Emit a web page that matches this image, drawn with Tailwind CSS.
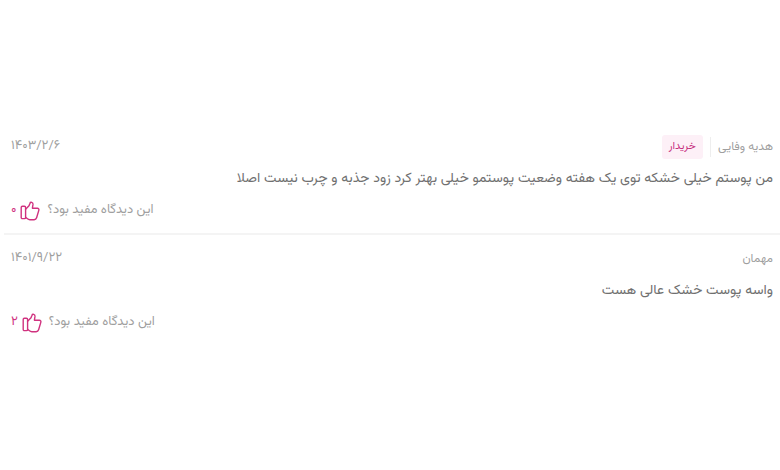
<!DOCTYPE html>
<html lang="fa" dir="rtl">
<head>
  <meta charset="UTF-8" />
  <meta name="viewport" content="width=device-width, initial-scale=1.0" />
  <title>دیدگاه‌ها</title>
  <script src="https://cdn.jsdelivr.net/npm/@tailwindcss/browser@4"></script>
</head>
<body class="flex min-h-screen flex-col justify-center bg-white pl-1 font-[Vazirmatn,sans-serif] text-[13px] text-[#9f9f9f]">
  <article class="border-b-2 border-[#f4f4f4] px-[7px] pt-3 pb-[10px]">
    <header class="flex h-6 items-center justify-between">
      <div class="flex items-center">
        <span class="text-xs">هدیه وفایی</span>
        <span class="mx-[7px] h-5 w-px bg-[#eeeeee]"></span>
        <span class="flex h-6 items-center rounded-[3px] bg-[#fdf0f7] px-[7px] text-[11px] text-[#c73080]">خریدار</span>
      </div>
      <time datetime="1403-02-06">۱۴۰۳/۲/۶</time>
    </header>
    <p class="mt-2 text-sm leading-6 text-[#707070]">من پوستم خیلی خشکه توی یک هفته وضعیت پوستمو خیلی بهتر کرد زود جذبه و چرب نیست اصلا</p>
    <div class="mt-2 flex h-6 items-center justify-end gap-[7px]">
      <span>این دیدگاه مفید بود؟</span>
      <button type="button" aria-label="مفید بود" class="flex items-center gap-1 text-[#d0327f]">
        <svg class="size-5" viewBox="0 0 20 20" fill="none" stroke="currentColor" stroke-width="1.4" stroke-linejoin="round" stroke-linecap="round">
          <rect x="1.2" y="5.2" width="4.4" height="12.4" rx="1.2" />
          <path d="M5.6 8.3 9 4.8 10 2.2C10.4 .8 13.2 1 13 3.4L12.4 7.2H17.3C18.6 7.2 19.2 8.2 18.8 9.4L16.6 16.8C16.2 18.1 15.4 18.7 14.1 18.7H9.8C8.8 18.7 8.2 18.4 7.5 17.8L5.6 16.4" />
        </svg>
        <span>۰</span>
      </button>
    </div>
  </article>
  <article class="px-[7px] py-3">
    <header class="flex h-6 items-center justify-between">
      <span class="text-xs">مهمان</span>
      <time datetime="1401-09-22">۱۴۰۱/۹/۲۲</time>
    </header>
    <p class="mt-2 text-sm leading-6 text-[#707070]">واسه پوست خشک عالی هست</p>
    <div class="mt-2 flex h-6 items-center justify-end gap-[7px]">
      <span>این دیدگاه مفید بود؟</span>
      <button type="button" aria-label="مفید بود" class="flex items-center gap-1 text-[#d0327f]">
        <svg class="size-5" viewBox="0 0 20 20" fill="none" stroke="currentColor" stroke-width="1.4" stroke-linejoin="round" stroke-linecap="round">
          <rect x="1.2" y="5.2" width="4.4" height="12.4" rx="1.2" />
          <path d="M5.6 8.3 9 4.8 10 2.2C10.4 .8 13.2 1 13 3.4L12.4 7.2H17.3C18.6 7.2 19.2 8.2 18.8 9.4L16.6 16.8C16.2 18.1 15.4 18.7 14.1 18.7H9.8C8.8 18.7 8.2 18.4 7.5 17.8L5.6 16.4" />
        </svg>
        <span>۲</span>
      </button>
    </div>
  </article>
</body>
</html>
